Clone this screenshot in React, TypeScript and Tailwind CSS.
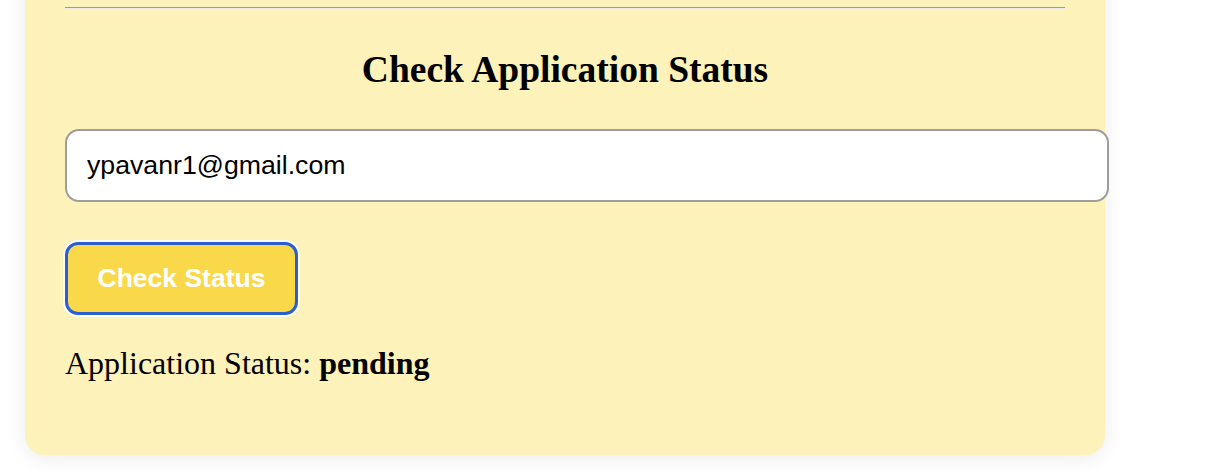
export default function App() {
  return (
    <div className="w-[1216px] h-[472px] overflow-hidden bg-white">
      <div className="ml-[25px] mt-[-33px] flex w-[1080px] flex-col rounded-[20px] bg-[#fdf2b9] px-[40px] pt-[40px] pb-[73px] shadow-[0_4px_20px_rgba(0,0,0,0.08)]">
        <hr className="h-0 border-0 border-t-[1.5px] border-b border-t-[#9a9a9a] border-b-[#ececec]" />
        <h2 className="mt-[39px] mb-[38px] text-center font-['Liberation_Serif',serif] text-[37.5px] leading-[43px] font-bold text-black">
          Check Application Status
        </h2>
        <input
          type="text"
          defaultValue="ypavanr1@gmail.com"
          className="box-content block h-[31px] w-full rounded-[14px] border-2 border-[#9d9d9d] bg-white px-[20px] py-[19px] font-['Liberation_Sans',Arial,sans-serif] text-[26.7px] text-black outline-none"
        />
        <button className="mt-[40px] h-[73px] w-[233px] rounded-[13px] border-[3px] border-[#2b5fcf] bg-[#f9d94a] font-['Liberation_Sans',Arial,sans-serif] text-[26.5px] font-bold text-white shadow-[0_0_0_2px_#ffffff]">
          Check Status
        </button>
        <p className="mt-[30px] font-['Liberation_Serif',serif] text-[32px] leading-[37px] text-black">
          Application Status: <b>pending</b>
        </p>
      </div>
    </div>
  );
}
